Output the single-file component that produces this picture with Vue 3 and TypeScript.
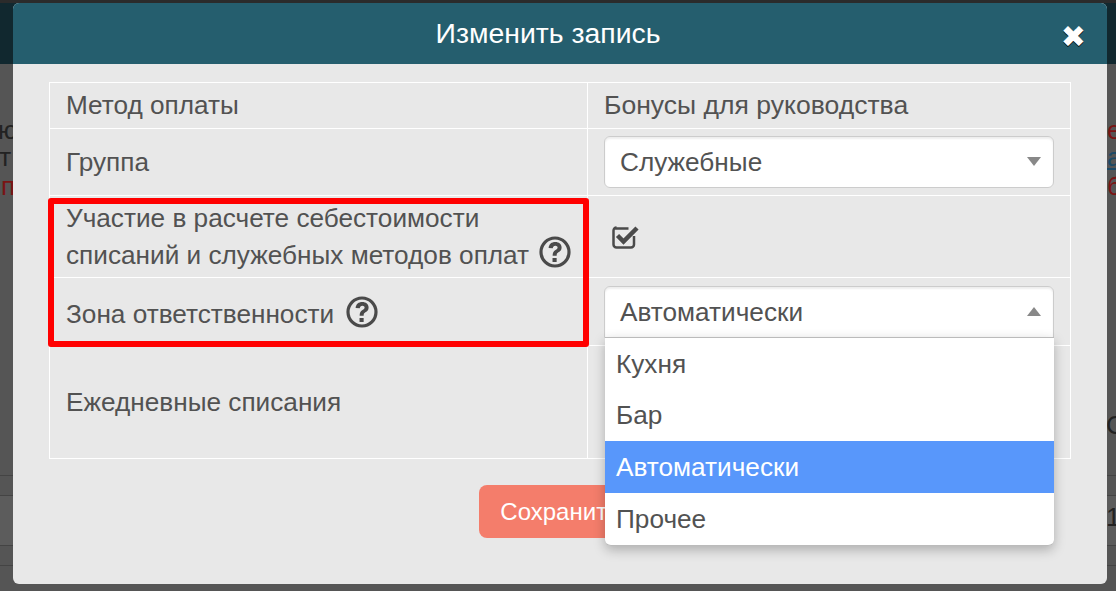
<script setup lang="ts">
const options: { label: string; active?: boolean }[] = [
  { label: 'Кухня' },
  { label: 'Бар' },
  { label: 'Автоматически', active: true },
  { label: 'Прочее' },
]
</script>

<template>
  <div class="page">
    <div class="topstrip"></div>
    <div class="darkband"></div>
    <div class="bgband"></div>
    <span class="frag l1">ую</span>
    <span class="frag l2">нт</span>
    <span class="frag l3 red">п</span>
    <span class="frag r1 red">е</span>
    <span class="frag r2 link">а</span>
    <span class="frag r3 red">б</span>
    <span class="frag r4">С</span>
    <span class="frag r5">1</span>
    <div class="hline h1"></div>
    <div class="hline h2"></div>
    <div class="hline h3"></div>
    <div class="hline h4"></div>

    <div class="modal">
      <header class="head">
        <h2 class="title">Изменить запись</h2>
        <span class="close">✖</span>
      </header>
      <div class="body">
        <div class="tbl">
          <div class="row r-head">
            <div class="c1">Метод оплаты</div>
            <div class="c2 wide">Бонусы для руководства</div>
          </div>
          <div class="row r-group">
            <div class="c1">Группа</div>
            <div class="c2">
              <div class="select">
                <span>Служебные</span>
                <i class="arrow"></i>
              </div>
            </div>
          </div>
          <div class="row r-part">
            <div class="c1 multi">
              Участие в расчете себестоимости<br />списаний и служебных методов оплат
              <svg class="help" viewBox="0 0 32 32">
                <circle cx="16" cy="16" r="14" fill="none" stroke="#4a4a4a" stroke-width="3.2" />
                <path transform="translate(16 16) scale(1.18) translate(-16 -16)" d="M10.600 12.600c.3-3.200 2.500-5 5.600-5 3.200 0 5.400 1.900 5.400 4.500 0 2.100-1.100 3.200-2.700 4.200-1.200.8-1.500 1.300-1.500 2.900h-3.400c0-2.500.7-3.700 2.400-4.800 1.200-.8 1.800-1.300 1.800-2.200 0-1-.8-1.600-1.900-1.600-1.300 0-2 .8-2.200 2.200z M13.900 21h3.500v3.500h-3.500z" fill="#4a4a4a" />
              </svg>
            </div>
            <div class="c2">
              <svg class="check" viewBox="0 0 28 28">
                <path d="M3.500 5.500h14M23 13v8.500a3 3 0 0 1-3 3H5.500a3 3 0 0 1-3-3V7.500a3 3 0 0 1 3-3" fill="none" stroke="#4a4a4a" stroke-width="2.500" />
                <path d="M6.500 12.500l6 6L26 5" fill="none" stroke="#4a4a4a" stroke-width="4.500" />
              </svg>
            </div>
          </div>
          <div class="row r-zone">
            <div class="c1">
              <span class="zone-label">Зона ответственности</span>
              <svg class="help" viewBox="0 0 32 32">
                <circle cx="16" cy="16" r="14" fill="none" stroke="#4a4a4a" stroke-width="3.2" />
                <path transform="translate(16 16) scale(1.18) translate(-16 -16)" d="M10.600 12.600c.3-3.200 2.500-5 5.600-5 3.200 0 5.400 1.900 5.400 4.500 0 2.100-1.100 3.200-2.700 4.200-1.200.8-1.500 1.300-1.500 2.900h-3.400c0-2.500.7-3.700 2.400-4.800 1.200-.8 1.800-1.300 1.800-2.200 0-1-.8-1.600-1.900-1.600-1.300 0-2 .8-2.200 2.200z M13.900 21h3.500v3.500h-3.500z" fill="#4a4a4a" />
              </svg>
            </div>
            <div class="c2">
              <div class="select open">
                <span class="nudge">Автоматически</span>
                <i class="arrow up"></i>
                <ul class="drop">
                  <li v-for="o in options" :key="o.label" :class="{ active: o.active }">{{ o.label }}</li>
                </ul>
              </div>
            </div>
          </div>
          <div class="row r-daily">
            <div class="c1">Ежедневные списания</div>
            <div class="c2"></div>
          </div>
        </div>
        <div class="foot">
          <button class="save" type="button">Сохранить</button>
        </div>
      </div>
    </div>
    <div class="redbox"></div>
  </div>
</template>

<style>
html, body { margin: 0; padding: 0; }
</style>

<style scoped>
.page {
  position: relative;
  width: 1116px;
  height: 591px;
  overflow: hidden;
  background: #555;
  font-family: "Liberation Sans", Arial, sans-serif;
  color: #525252;
}
.topstrip { position: absolute; left: 0; right: 0; top: 0; height: 3px; background: #2b2b2b; }
.darkband { position: absolute; left: 0; right: 0; top: 3px; height: 61px; background: #11282f; }
.bgband { position: absolute; left: 0; right: 0; top: 496px; height: 49px; background: #5c5c5c; }
.hline { position: absolute; left: 0; right: 0; height: 1px; background: #444; }
.h1 { top: 475px; }
.h2 { top: 495px; }
.h3 { top: 545px; }
.h4 { top: 565px; }
.frag { position: absolute; font-size: 26px; line-height: 24px; color: #222; }
.red { color: #7a1414; }
.link { color: #1c4a66; text-decoration: underline; }
.l1 { left: -15px; top: 118px; }
.l2 { left: -15px; top: 145px; }
.l3 { left: 1px; top: 174px; }
.r1 { left: 1107px; top: 118px; }
.r2 { left: 1107px; top: 145px; }
.r3 { left: 1107px; top: 174px; }
.r4 { left: 1106px; top: 413px; }
.r5 { left: 1106px; top: 505px; }

.modal {
  position: absolute;
  left: 13px;
  top: 3px;
  width: 1094px;
  height: 581px;
  background: #e8e8e8;
  border-radius: 6px;
  overflow: hidden;
}
.head {
  position: relative;
  height: 61px;
  background: #255e6e;
  display: flex;
  align-items: center;
  justify-content: center;
  padding-right: 24px;
}
.title { margin: 0; font-size: 28.4px; font-weight: 400; color: #fff; }
.close {
  position: absolute;
  right: 21px;
  top: 17px;
  font-family: "DejaVu Sans", sans-serif;
  font-size: 30px;
  line-height: 34px;
  color: #fff;
  text-shadow: 0 1px 0 #000;
}
.body { padding: 18px 36px 0; }
.tbl { border: 1px solid #fff; }
.row { display: grid; grid-template-columns: 537px 1fr; border-top: 1px solid #fff; font-size: 26.2px; }
.row:first-child { border-top: 0; }
.c1, .c2 { display: flex; align-items: center; padding: 0 16px; min-width: 0; }
.c2 { border-left: 1px solid #fff; }
.c2.wide { font-size: 26.55px; }
.c1.multi { display: block; align-self: center; line-height: 37px; white-space: nowrap; }
.r-head { height: 45px; }
.r-group { height: 66px; }
.r-part { height: 81px; }
.r-zone { height: 67px; }
.r-daily { height: 112px; }
.help { position: relative; top: -5px; width: 32px; height: 32px; vertical-align: middle; margin-left: 3px; }
.r-zone .c1 { gap: 12px; }
.r-zone .help { margin-left: 0; top: 0; }
.zone-label { position: relative; top: 3px; }
.check { width: 28px; height: 28px; margin-left: 7px; }
.select {
  position: relative;
  flex: 1;
  height: 50px;
  background: #fff;
  border: 1px solid #ccc;
  border-radius: 6px;
  display: flex;
  align-items: center;
  padding-left: 15px;
  box-shadow: inset 0 2px 2px #eee;
}
.select.open { border-radius: 6px 6px 0 0; }
.nudge { position: relative; top: 1px; }
.arrow {
  position: absolute;
  right: 12px;
  top: 20px;
  width: 0;
  height: 0;
  border-left: 7px solid transparent;
  border-right: 7px solid transparent;
  border-top: 9px solid #888;
}
.arrow.up { border-top: 0; border-bottom: 9px solid #888; }
.drop {
  position: absolute;
  left: 0;
  right: -1px;
  top: 50px;
  margin: 0;
  padding: 0;
  list-style: none;
  background: #fff;
  border-top: 1px solid #bbb;
  border-bottom: 1px solid #bbb;
  border-radius: 0 0 6px 6px;
  box-shadow: 0 4px 12px rgba(0, 0, 0, 0.25);
  z-index: 2;
}
.drop li { height: 51.75px; line-height: 53px; padding-left: 11px; }
.drop li.active { background: #5897fb; color: #fff; }
.foot { display: flex; justify-content: center; padding-top: 26px; }
.save {
  width: 162px;
  height: 53px;
  border: 0;
  border-radius: 8px;
  background: #f47d6b;
  color: #fff;
  font-family: inherit;
  font-size: 24px;
  padding: 0;
}
.redbox {
  position: absolute;
  left: 48px;
  top: 198px;
  width: 529px;
  height: 137px;
  border: 6px solid #f00;
  border-radius: 3px;
}
</style>
